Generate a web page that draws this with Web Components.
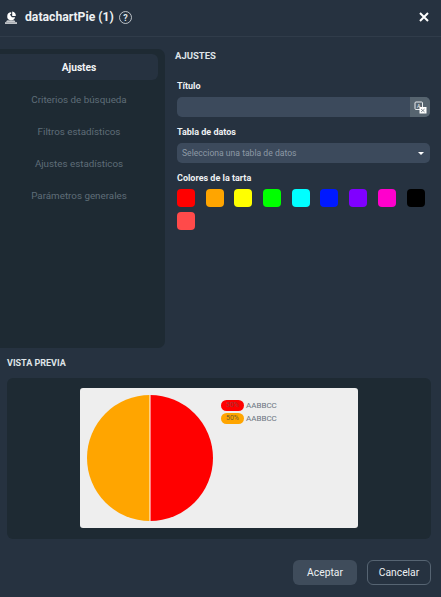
<!DOCTYPE html>
<html lang="es"><head><meta charset="utf-8"><title>datachartPie</title>
<style>
html,body{margin:0;padding:0;background:#263240;height:100%;overflow:hidden}
body{font-family:Roboto,"Liberation Sans",sans-serif;color:#e8ecef}
</style></head><body>
<chart-dialog></chart-dialog>
<script>
function def(name,html,init){
  customElements.define(name,class extends HTMLElement{
    connectedCallback(){
      if(!this.shadowRoot){this.attachShadow({mode:'open'}).innerHTML=html;if(init)init(this)}
    }
  });
}
def('dialog-header',`<style>
:host{display:flex;align-items:center;height:37px;box-sizing:border-box;border-bottom:1px solid #303c4a;padding:0 12px 2px 5px;font-size:12.2px;font-weight:700;color:#eef1f3}
svg{display:block;flex:none}
.t{margin-left:7px}
.h{margin-left:5px}
.x{margin-left:auto}
</style>
<svg width="13" height="13" viewBox="0 0 13 13"><path fill="#fff" d="M6.2 1.2a4 4 0 1 0 3.9 5H6.9L4.9 3.4 6.2 2.7z"/><path fill="#fff" d="M7.2.6v4.4h3.6A4.3 4.3 0 0 0 7.2.6z"/><rect x="0" y="11.4" width="12" height="1.3" fill="#fff"/><path fill="#fff" d="M2 9.6h7.4l1 1.2H1z"/></svg>
<span class="t">datachartPie (1)</span>
<svg class="h" width="13" height="13" viewBox="0 0 13 13"><circle cx="6.5" cy="6.5" r="6" fill="none" stroke="#dfe4e8" stroke-width=".8"/><text x="6.5" y="9.6" text-anchor="middle" font-family="Roboto,sans-serif" font-size="9" fill="#dfe4e8">?</text></svg>
<svg class="x" width="10" height="10" viewBox="0 0 10 10"><path d="M1 1l8 8M9 1l-8 8" stroke="#fff" stroke-width="2"/></svg>`);

def('side-nav',`<style>
:host{display:block;width:165px;height:299px;box-sizing:border-box;background:#1e2a33;border-radius:0 7px 7px 0;padding:5px 7px 0 0;flex:none}
.i{height:32px;display:flex;align-items:center;justify-content:center;font-size:9.8px;color:#5f6d78}
.a{height:26px;background:#263240;border-radius:0 6px 6px 0;color:#f2f4f6;font-weight:700;font-size:10.2px;margin-bottom:3px}
</style>
<div class="i a">Ajustes</div>
<div class="i">Criterios de búsqueda</div>
<div class="i">Filtros estadísticos</div>
<div class="i">Ajustes estadísticos</div>
<div class="i">Parámetros generales</div>`);

def('form-field',`<style>
:host{display:block;margin-bottom:9px}
label{display:block;font-size:9px;font-weight:700;color:#eef1f3;line-height:13px;margin-bottom:4px}
</style><label></label><slot></slot>`,el=>{el.shadowRoot.querySelector('label').textContent=el.getAttribute('label')});

def('text-input',`<style>
:host{display:flex;height:20px;background:#3c4a5c;border-radius:5px;overflow:hidden}
.b{margin-left:auto;width:20px;background:#56646f;display:flex;align-items:center;justify-content:center}
</style><div class="b"><svg width="13" height="13" viewBox="0 0 13 13"><rect x="1" y="1" width="7.5" height="7.5" rx="1" fill="none" stroke="#e8ecef" stroke-width="1"/><text x="4.7" y="7" text-anchor="middle" font-family="Roboto,sans-serif" font-size="5.5" fill="#e8ecef">A</text><rect x="5.5" y="6" width="7" height="6.5" fill="#fff"/><path d="M7 8l3.6 3M10.6 8L7 11" stroke="#56646f" stroke-width=".7"/></svg></div>`);

def('select-input',`<style>
:host{display:flex;align-items:center;height:20px;background:#3c4a5c;border-radius:5px;padding:0 6px 0 5px;font-size:8.6px;color:#8d99a5}
i{margin-left:auto;width:0;height:0;border:3.5px solid transparent;border-top:3.5px solid #fff;border-bottom:0}
</style><span>Selecciona una tabla de datos</span><i></i>`);

def('color-swatches',`<style>
:host{display:flex;flex-wrap:wrap;gap:5px 10.7px}
b{width:18px;height:18px;border-radius:4px;display:block}
</style>`+['#ff0000','#ffa500','#ffff00','#00ff00','#00ffff','#0019ff','#8000ff','#ff00cc','#000000','#ff4a4a'].map(c=>`<b style="background:${c}"></b>`).join(''));

def('pie-preview',`<style>
:host{display:flex;margin:0 auto;width:278px;height:140px;box-sizing:border-box;background:#eeeeee;border-radius:3px;padding:7px}
svg{display:block;flex:none}
.l{margin-left:8px;padding-top:5px;font-size:8px;color:#6b7480;line-height:11px}
.r{display:flex;align-items:center;gap:2px;height:11px;margin-bottom:2px}
.p{width:23px;height:11px;border-radius:6px;font-size:7px;text-align:center;color:#6b5a30;line-height:11px}
</style>
<svg width="126" height="126" viewBox="0 0 126 126"><path d="M63 0a63 63 0 0 1 0 126z" fill="#ff0000"/><path d="M63 126a63 63 0 0 1 0-126z" fill="#ffa500"/><path d="M63 0v126" stroke="#fff" stroke-width="1"/></svg>
<div class="l"><div class="r"><span class="p" style="background:#ff0000;color:#9c3a3a">50%</span><span>AABBCC</span></div><div class="r"><span class="p" style="background:#ffa500">50%</span><span>AABBCC</span></div></div>`);

def('app-button',`<style>
:host{display:flex;align-items:center;justify-content:center;width:64px;height:25px;box-sizing:border-box;border-radius:6px;font-size:10.3px;color:#eef1f3;background:#3f4c5b}
:host([outline]){background:transparent;border:1px solid #566472}
</style><slot></slot>`);

def('chart-dialog',`<style>
:host{display:block;width:441px;height:597px;background:#263240}
.body{display:flex;padding-top:12px;height:299px}
.main{flex:1;padding:0 11px 0 10px}
h2{font-size:9px;font-weight:700;color:#dfe4e8;margin:0;line-height:13px}
.main h2{font-size:9.5px}
.form{padding:18px 0 0 2px}
.sec{padding:9px 10px 0 7px}
.sec h2{margin-bottom:8px}
.panel{background:#1e2a33;border-radius:6px;height:161px;padding-top:10px;box-sizing:border-box}
.foot{display:flex;justify-content:flex-end;gap:10px;padding:21px 10px 0 0}
</style>
<dialog-header></dialog-header>
<div class="body"><side-nav></side-nav>
<div class="main"><h2>AJUSTES</h2>
<div class="form">
<form-field label="Título"><text-input></text-input></form-field>
<form-field label="Tabla de datos"><select-input></select-input></form-field>
<form-field label="Colores de la tarta"><color-swatches></color-swatches></form-field>
</div></div></div>
<div class="sec"><h2>VISTA PREVIA</h2><div class="panel"><pie-preview></pie-preview></div></div>
<div class="foot"><app-button>Aceptar</app-button><app-button outline>Cancelar</app-button></div>`);
</script></body></html>
